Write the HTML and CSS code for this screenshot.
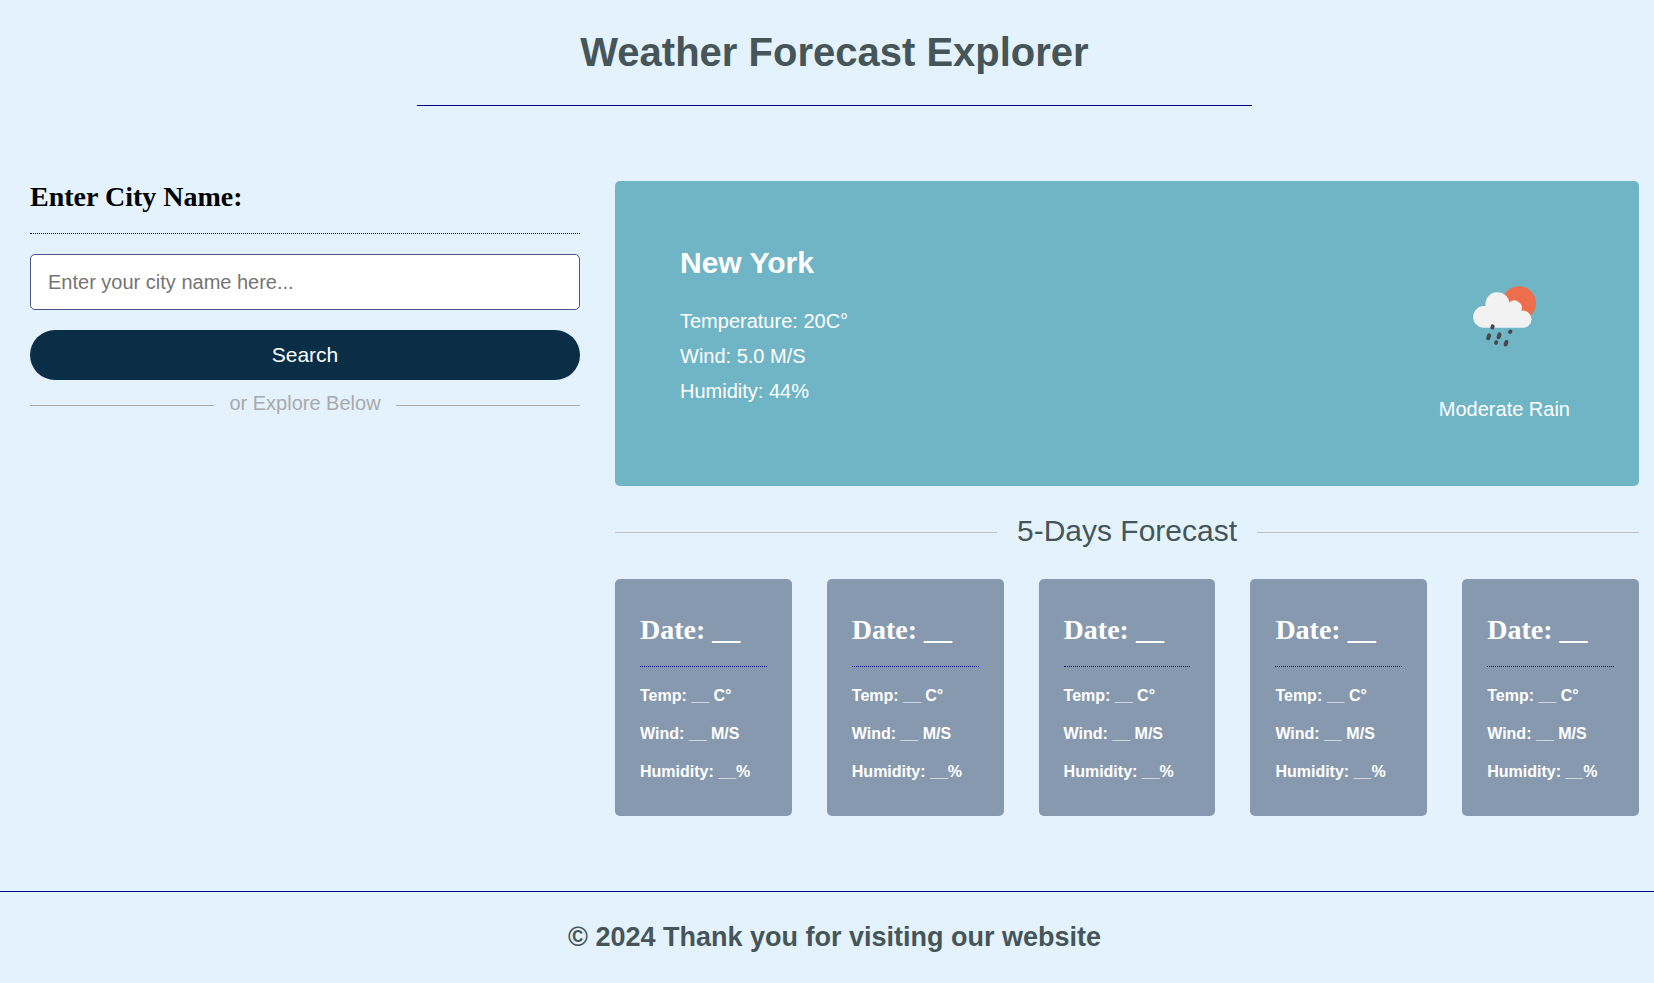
FILE: index.html
```html
<!DOCTYPE html>
<html lang="en">
<head>
<meta charset="utf-8">
<meta name="viewport" content="width=device-width, initial-scale=1">
<title>Weather Forecast Explorer</title>
<link rel="stylesheet" href="styles.css">
</head>
<body>
<header class="site-header">
  <h1>Weather Forecast Explorer</h1>
</header>
<main class="layout">
  <form class="search">
    <h2 class="section-title"><label for="city">Enter City Name:</label></h2>
    <input class="search-input" id="city" type="text" placeholder="Enter your city name here...">
    <button class="search-button" type="button">Search</button>
    <p class="divider">or Explore Below</p>
  </form>
  <div class="weather">
    <section class="current">
      <div>
        <h2 class="current-city">New York</h2>
        <p class="current-line">Temperature: 20C°</p>
        <p class="current-line">Wind: 5.0 M/S</p>
        <p class="current-line">Humidity: 44%</p>
      </div>
      <figure class="condition">
        <svg class="condition-icon" viewBox="0 0 100 100" role="img" aria-label="Rain cloud and sun">
          <circle cx="65" cy="37.300" r="17" fill="#ec6e4c"/>
          <path fill="#f2f2f2" d="M30 61.800a10.900 10.900 0 0 1 0-21.800q.7-.1 1.500 0a12 12 0 1 1 23.800-3.500a7.500 7.500 0 0 1 12 8.300a8.600 8.600 0 1 1 .8 17z"/>
          <g stroke="#48484a" stroke-width="4" stroke-linecap="round">
            <path d="M38.700 60.300l-.4 1.200M35.200 69.300l-1 3M45.500 68.300l-1 3M56.400 65.500l-.3.500M42.300 76.300l-.3.500M52.500 76l-.9 2.500"/>
          </g>
        </svg>
        <figcaption>Moderate Rain</figcaption>
      </figure>
    </section>
    <h2 class="divider divider-large">5-Days Forecast</h2>
    <section class="days">
      <article class="day"><h3 class="section-title">Date: __</h3><p>Temp: __ C°</p><p>Wind: __ M/S</p><p>Humidity: __%</p></article>
      <article class="day"><h3 class="section-title">Date: __</h3><p>Temp: __ C°</p><p>Wind: __ M/S</p><p>Humidity: __%</p></article>
      <article class="day"><h3 class="section-title">Date: __</h3><p>Temp: __ C°</p><p>Wind: __ M/S</p><p>Humidity: __%</p></article>
      <article class="day"><h3 class="section-title">Date: __</h3><p>Temp: __ C°</p><p>Wind: __ M/S</p><p>Humidity: __%</p></article>
      <article class="day"><h3 class="section-title">Date: __</h3><p>Temp: __ C°</p><p>Wind: __ M/S</p><p>Humidity: __%</p></article>
    </section>
  </div>
</main>
<footer class="site-footer">
  <p>© 2024 Thank you for visiting our website</p>
</footer>
</body>
</html>
```
FILE: styles.css
```css
* {
  box-sizing: border-box;
  margin: 0;
}

body {
  background: #e3f2fd;
  color: #fff;
  font-family: "Liberation Sans", Arial, sans-serif;
  font-size: 20px;
  line-height: 23px;
}

.site-header {
  padding-left: 15px;
}

.site-header h1 {
  width: calc(50% + 15px);
  margin: 0 auto;
  padding: 30px 0;
  border-bottom: 1px solid #00008b;
  color: #455558;
  font-size: 40px;
  line-height: 45px;
  text-align: center;
}

.layout {
  display: grid;
  grid-template-columns: 550fr 1024fr;
  align-items: start;
  gap: 35px;
  padding: 75px 15px 75px 30px;
}

.search {
  display: flex;
  flex-direction: column;
}

.section-title {
  margin-bottom: 20px;
  padding-bottom: 20px;
  border-bottom: 1px dotted #00008b;
  font-family: "Liberation Serif", "Times New Roman", serif;
  font-size: 28px;
  font-weight: bold;
  line-height: 32px;
}

.search .section-title {
  color: #000;
}

.search-input {
  width: 100%;
  height: 56px;
  margin-bottom: 20px;
  padding: 0 17px;
  border: 1px solid #4f5285;
  border-radius: 5px;
  background: #fff;
  font: inherit;
}

.search-input::placeholder {
  color: #757575;
}

.search-button {
  height: 50px;
  padding: 0 20px 2px;
  border: 0;
  border-radius: 25px;
  background: #0a2e45;
  color: #fff;
  font: inherit;
  font-size: 21px;
  cursor: pointer;
}

.divider {
  display: flex;
  align-items: center;
  gap: 15px;
  margin-top: 12px;
  color: #a9a9a9;
}

.divider::before,
.divider::after {
  content: "";
  flex: 1;
  margin-top: 4px;
  border-top: 1px solid #a9a9a9;
}

.divider-large {
  gap: 20px;
  margin: 28px 0 31px;
  color: #455558;
  font-size: 30px;
  font-weight: normal;
  line-height: 34px;
}

.divider-large::before,
.divider-large::after {
  margin-top: 2px;
  border-color: #c0c0c0;
}

.current {
  display: flex;
  justify-content: space-between;
  padding: 65px;
  border-radius: 5px;
  background: #70b5c6;
}

.current-city {
  margin-bottom: 30px;
  font-size: 30px;
  line-height: 34px;
}

.current-line + .current-line {
  margin-top: 12px;
}

.condition {
  display: flex;
  flex-direction: column;
  align-items: center;
  gap: 32px;
  margin: 20px 4px 0 0;
}

.condition-icon {
  width: 100px;
  height: 100px;
}

.days {
  display: grid;
  grid-template-columns: repeat(5, 1fr);
  gap: 35px;
}

.day {
  display: flex;
  flex-direction: column;
  padding: 35px 25px;
  border-radius: 5px;
  background: #8799af;
  font-size: 16px;
  font-weight: bold;
  line-height: 18px;
}

.day p + p {
  margin-top: 20px;
}

.site-footer {
  padding: 30px 0 30px 15px;
  border-top: 1px solid #00008b;
  color: #455558;
  font-size: 27px;
  font-weight: bold;
  line-height: 31px;
  text-align: center;
}
```
